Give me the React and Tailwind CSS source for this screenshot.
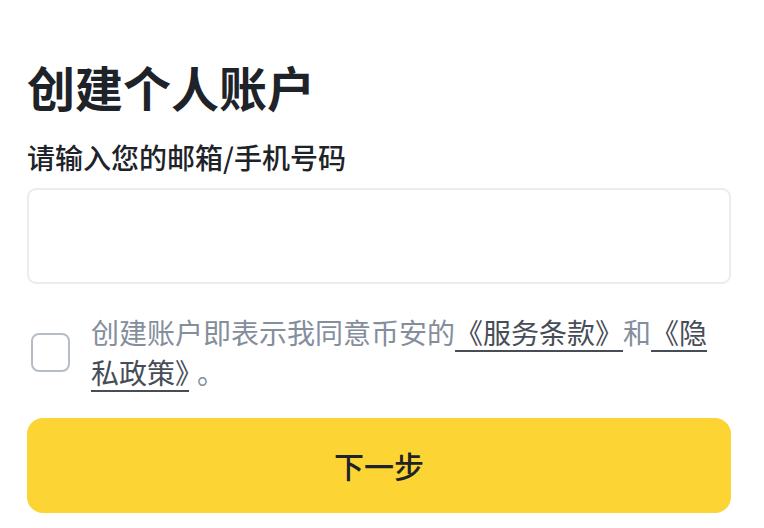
import React, { useState } from "react";

const App = () => {
  const [agreed, setAgreed] = useState(false);

  return (
    <div
      className="w-[764px] h-[528px] bg-white overflow-hidden pl-[27px] pr-[33px] pt-[57px]"
      style={{ fontFamily: '"Noto Sans CJK SC", "Noto Sans", sans-serif' }}
    >
      <h1 className="text-[48px] leading-[58px] font-bold text-[#1e2329]">创建个人账户</h1>

      <label className="block mt-[25px] text-[28px] leading-[34px] font-medium text-[#1e2329]">
        请输入您的邮箱/手机号码
      </label>
      <input
        type="text"
        className="mt-[14px] block w-[704px] h-[96px] rounded-[9px] border-2 border-[#eaecef] bg-white px-4 text-[26px] outline-none"
      />

      <div className="mt-[28px] flex items-center gap-[21px]">
        <button
          onClick={() => setAgreed(!agreed)}
          className="ml-[4px] w-[39px] h-[39px] shrink-0 rounded-[8px] border-2 border-[#b7bdc6] bg-white"
        />
        <p className="text-[28px] leading-[40px] text-[#848e9c]">
          创建账户即表示我同意币安的
          <a href="#" className="text-[#474d57] underline underline-offset-[6px] decoration-[2px]">
            《服务条款》
          </a>
          和
          <a href="#" className="text-[#474d57] underline underline-offset-[6px] decoration-[2px]">
            《隐私政策》
          </a>
          <span className="ml-[8px]">。</span>
        </p>
      </div>

      <button className="mt-[26px] w-[704px] h-[95px] rounded-[16px] bg-[#fcd535] text-[30px] font-medium text-[#1e2329]">
        下一步
      </button>
    </div>
  );
};

export default App;
